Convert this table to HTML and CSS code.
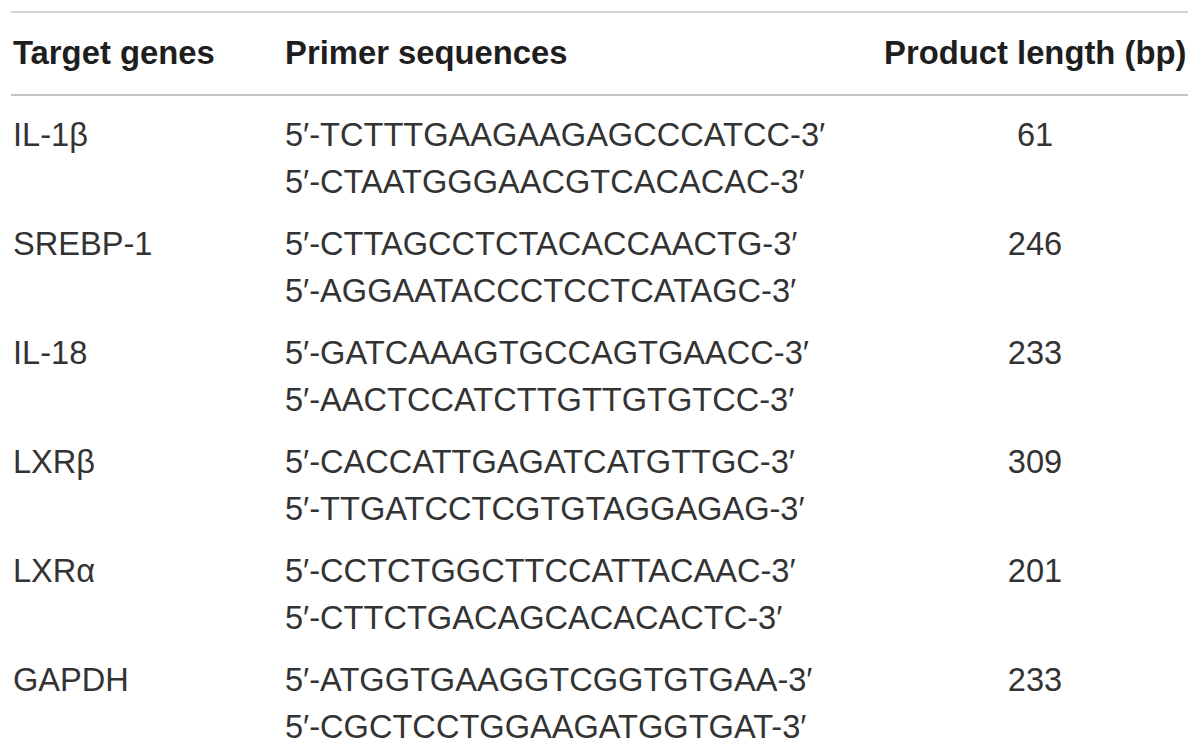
FILE: index.html
```html
<!DOCTYPE html>
<html lang="en">
<head>
<meta charset="utf-8">
<title>Primer sequences</title>
<link rel="stylesheet" href="styles.css">
</head>
<body>
<table class="primers">
  <thead>
    <tr>
      <th class="col-gene">Target genes</th>
      <th class="col-seq">Primer sequences</th>
      <th class="col-len">Product length (bp)</th>
    </tr>
  </thead>
  <tbody>
    <tr>
      <td class="col-gene">IL-1β</td>
      <td class="col-seq"><div>5′-TCTTTGAAGAAGAGCCCATCC-3′</div><div>5′-CTAATGGGAACGTCACACAC-3′</div></td>
      <td class="col-len">61</td>
    </tr>
    <tr>
      <td class="col-gene">SREBP-1</td>
      <td class="col-seq"><div>5′-CTTAGCCTCTACACCAACTG-3′</div><div>5′-AGGAATACCCTCCTCATAGC-3′</div></td>
      <td class="col-len">246</td>
    </tr>
    <tr>
      <td class="col-gene">IL-18</td>
      <td class="col-seq"><div>5′-GATCAAAGTGCCAGTGAACC-3′</div><div>5′-AACTCCATCTTGTTGTGTCC-3′</div></td>
      <td class="col-len">233</td>
    </tr>
    <tr>
      <td class="col-gene">LXRβ</td>
      <td class="col-seq"><div>5′-CACCATTGAGATCATGTTGC-3′</div><div>5′-TTGATCCTCGTGTAGGAGAG-3′</div></td>
      <td class="col-len">309</td>
    </tr>
    <tr>
      <td class="col-gene">LXRα</td>
      <td class="col-seq"><div>5′-CCTCTGGCTTCCATTACAAC-3′</div><div>5′-CTTCTGACAGCACACACTC-3′</div></td>
      <td class="col-len">201</td>
    </tr>
    <tr>
      <td class="col-gene">GAPDH</td>
      <td class="col-seq"><div>5′-ATGGTGAAGGTCGGTGTGAA-3′</div><div>5′-CGCTCCTGGAAGATGGTGAT-3′</div></td>
      <td class="col-len">233</td>
    </tr>
  </tbody>
</table>
</body>
</html>
```

FILE: styles.css
```css
html, body {
  margin: 0;
  padding: 0;
  background: #ffffff;
}

body {
  font-family: "Liberation Sans", Arial, Helvetica, sans-serif;
  color: #333333;
  font-size: 32.6px;
  line-height: 47px;
}

.primers {
  margin: 11px 0 0 11px;
  width: 1177px;
  border-collapse: collapse;
  table-layout: fixed;
}

.primers th,
.primers td {
  padding: 0;
  vertical-align: top;
  text-align: left;
  white-space: nowrap;
}

.primers thead tr {
  border-top: 2px solid #d2d2d2;
  border-bottom: 2px solid #c4c4c4;
}

.primers th {
  font-weight: bold;
  font-size: 32.8px;
  color: #1e1e1e;
  padding-top: 16px;
  padding-bottom: 18px;
}

.primers td {
  padding-top: 15px;
}

.primers .col-gene {
  width: 272px;
  padding-left: 2px;
}

.primers .col-seq {
  width: 599px;
}

.primers .col-len {
  text-align: center;
  padding-right: 2px;
}
```
